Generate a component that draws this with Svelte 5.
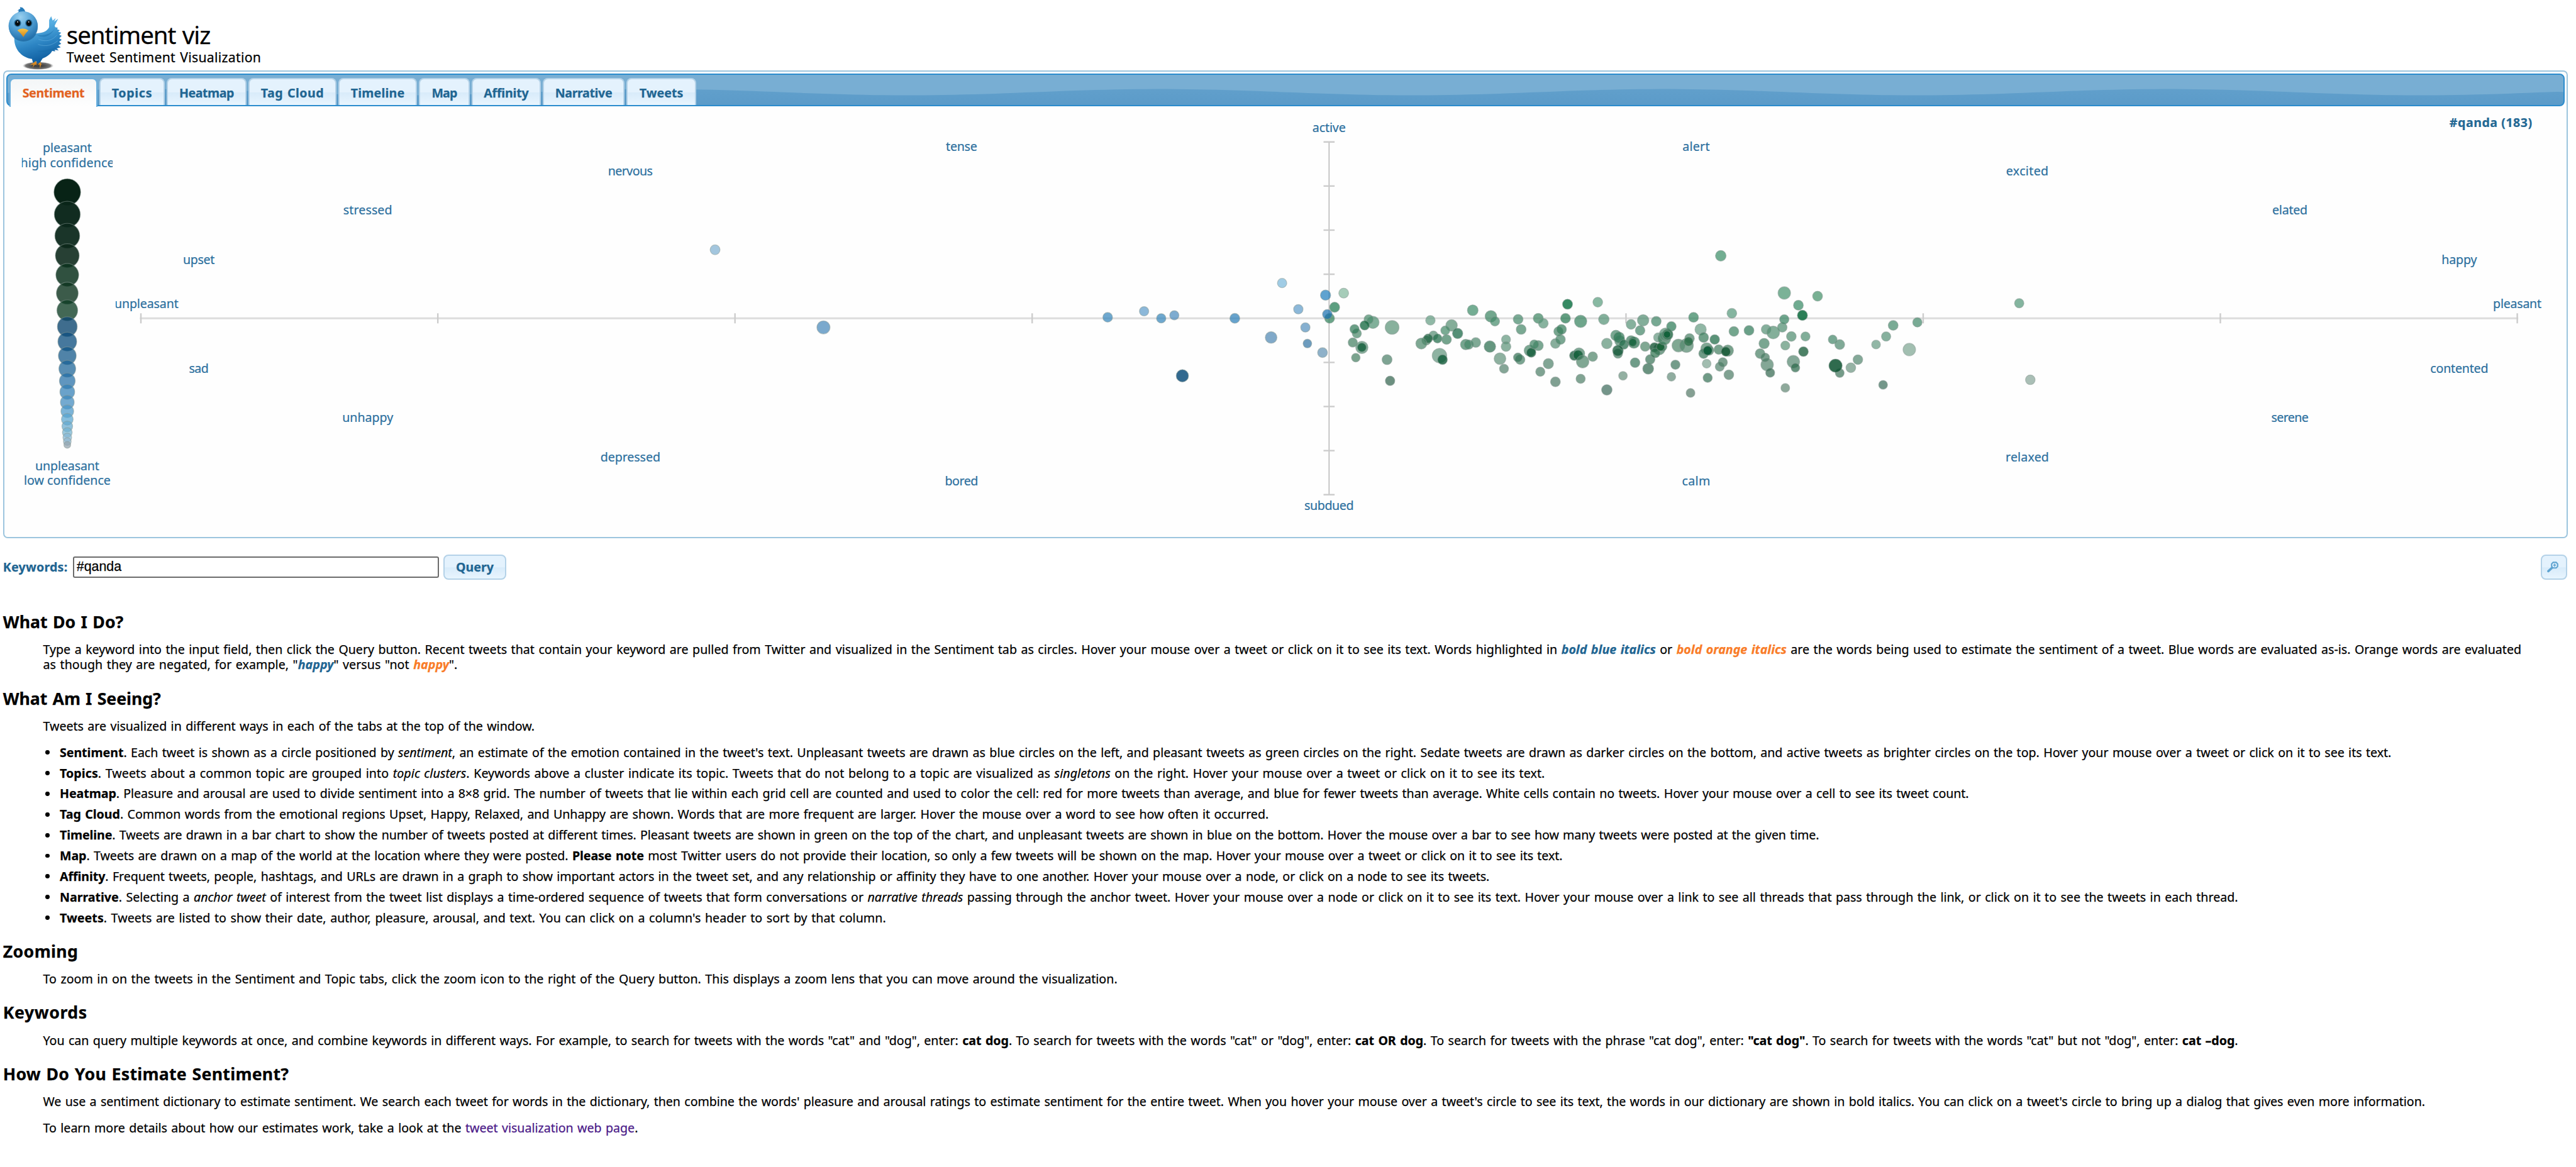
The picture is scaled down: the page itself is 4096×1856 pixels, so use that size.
<script>
  // 1rem equals ten chart units; the root font size sets the scale of the page.
  const UNIT = 0.80157;

  // Spreads a line of text over the given width by adjusting its tracking.
  function fit(node, width) {
    const natural = node.getBoundingClientRect().width;
    const count = node.textContent.trim().length;
    node.style.letterSpacing = `${(width * UNIT - natural) / count}px`;
  }

  const tabs = [
    { label: 'Sentiment', box: 174, text: 123, active: true },
    { label: 'Topics', box: 129.5, text: 80.5 },
    { label: 'Heatmap', box: 158, text: 108.5 },
    { label: 'Tag Cloud', box: 174, text: 125 },
    { label: 'Timeline', box: 156, text: 107 },
    { label: 'Map', box: 100, text: 50 },
    { label: 'Affinity', box: 137, text: 89 },
    { label: 'Narrative', box: 162, text: 113 },
    { label: 'Tweets', box: 138, text: 87 }
  ];

  // Gloss line of the tab bar.
  let wave = 'M0 0';
  for (let x = 0; x <= 5072; x += 20) {
    wave += `L${x} ${(35 + 6.3 * Math.cos(((x - 786) / 1000) * 2 * Math.PI)).toFixed(1)}`;
  }
  wave += 'L5080 35L5080 0Z';

  // label, x (centre), y (baseline), length
  const emotions = [
    ['active', 2637, 262, 66], ['tense', 1908, 300, 62], ['alert', 3365, 300, 54],
    ['nervous', 1251, 348, 89], ['excited', 4022, 348, 84], ['stressed', 730, 426, 97],
    ['elated', 4543, 426, 70], ['upset', 395, 524, 63], ['happy', 4879, 524, 70],
    ['unpleasant', 291, 612, 127], ['pleasant', 4994, 612, 96], ['sad', 395, 740, 39],
    ['contented', 4879, 740, 115], ['unhappy', 730, 838, 101], ['serene', 4543, 838, 74],
    ['depressed', 1251, 916, 119], ['relaxed', 4022, 916, 86], ['bored', 1908, 964, 66],
    ['calm', 3365, 964, 56], ['subdued', 2637, 1012, 98]
  ];

  const xTicks = [280, 869, 1458.5, 2048, 3226, 3815.5, 4405, 4994];
  const yTicks = [282, 369.5, 457, 544.5, 719.5, 807, 894.5, 982];

  const scaleDots = [
    [381.5, 26.5, '042315'], [425.7, 25.8, '102c20'], [468.3, 24.7, '1a3529'],
    [507.6, 23.7, '274034'], [545.9, 22.7, '30503f'], [582.2, 21.7, '3b5b4a'],
    [616.2, 20.7, '436855'], [648.6, 19.7, '3f6d8e'], [678.2, 18.7, '46789d'],
    [706.3, 17.7, '5083a8'], [732, 16.7, '588db3'], [756.2, 15.7, '6096bf'],
    [778, 14.7, '6aa2ca'], [798.4, 13.7, '74aad0'], [816.4, 12.7, '7db4d8'],
    [832.3, 11.7, '86bede'], [846.4, 10.7, '90c1dc'], [858.5, 9.7, '9ac8de'],
    [868.5, 8.7, 'a8cbe0'], [876.5, 7.7, 'b0cbdc'], [883, 6.8, 'b0bcc4']
  ];

  // x, y, radius, colour
  const tweets = `
1419 496 9.8 a3c6de|1634 650 13 7aa9cd|2197.8 630 9.6 6ea8cf|2270 618 9.3 8cb8d9|2304 632 9.3 6ea8cf|2330 626 9.2 7eacd0
2450 632 9.8 67a3cd|2522 670 11.6 80a9c9|2543.8 562 9.3 a0cce5|2576 614 9.4 8cb8d9|2590 650 9.3 86b0d0|2594 682 8.6 6d9cbe
2624 700 9.8 8fb1c9|2346 746 12.2 32698f|2630 586 10.2 5fa3d0|2638 632 9.8 6aa588|2633.5 624 9.6 5b98c6|2666 582 9.8 a6ccb9
2648 610 10 5c9f80|2724 640 12.2 82b09a|2715.6 634 9.3 7dac95|2707.6 646 9.4 4a8b6c|2692 662 9.2 7daa94|2687.5 653.5 9.2 6a9f87
2684 680 9.2 78a48f|2702 689.7 12.3 86b09c|2702 689.7 8.8 438063|2690 710 8.6 7aa38f|2762 650 13.8 88b19d|2752 714 10 7ea493
2758 756 9.4 6c9080|2838 636 9.5 90b9a6|2880 646 11.5 84ae99|2867.5 656 9 79ab93|2892 662 10.3 569077|2844 666 9 85ae9b
2852 672 9 5d957b|2830 676 9 80a893|2833.5 672 9 5a8d75|2820 682 11 7ea894|2870 674 9.7 75a48d|2856 706 14.5 8fb3a2
2862 714 9.7 3f7b60|2922 616 10.7 75ad93|2958 628 11.6 72a78e|2966 638 9.3 7aac95|2908 684 10.5 75a58f|2914 684 9.3 7aa893
2928 680 9.7 80aa96|2956 688 11.5 66967f|2976 712 11.7 8eb1a1|2984 732 9 85a697|2988 674 9 8fb5a3|2988 688 9.7 8bb29f
3012 634 9.7 7aab95|3018 654 9.8 7aa994|3016 714 9.5 7aa591|3011.7 709.7 9 6d9a85|3035 696 11.2 7aa892|3038 700 9.3 437d62
3052 686 10 7ba893|3044 683.7 9 75a58e|3052 632 10 74a88f|3062 642 9.7 88b39f|3072 722 10.2 82a695|3056 738 9.2 7fa392
3086 758 9.8 80a192|3086 682 9.7 88ae9c|3096 674 9.7 7aa792|3092 658 9.3 76a68f|3098 654 9.8 6fa289|3106 632 9.8 629e82
3110 604 10 368a63|3136 638 12.3 6fa68c|3170 600 9.7 88b9a2|3182 634 10.5 84b19c|3123.5 706 9.5 4c8068|3132.7 702 11.5 7da894
3131 705 9.7 3b7a5c|3140 718 12.5 80a794|3160 708 9.5 80a794|3136 752 9.2 82a494|3188 682 10.5 8bb29f|3188 774 10.5 75958a
3214 677 10.5 7aa892|3206 666 10.5 78a891|3212 670 11 6b9e86|3221.7 684 9.3 5d937a|3210 702 9.3 7aa28f|3210 696 10.7 4c8067
3220 746 8.6 94b0a2|3236 644 9.7 86b19d|3236 676 9.7 76a38d|3241.7 680 11.5 659a80|3239.5 680 8 568c71|3244 720 9.6 709c88
3254 656 9.6 78a892|3260 636 11.4 83ae9a|3286 638 9.8 77a993|3264 688 9.5 80a894|3270 732 10.8 6a9380|3274 713.5 9.5 729c88
3292 693 11.5 7aa490|3282.5 689.7 9.5 46795f|3284 700.7 9.7 6a9a82|3290 670 9.3 8fb4a3|3298 688 9.3 75a18b|3294.5 688.7 8 47825f
3302 672 12.8 6f9e86|3305 664 13 84ae9a|3316 648 9.6 68a186|3308.5 664 10.8 6a9a82|3307.5 664 7 2f7553|3324 724 9.2 759c8a
3316 748 8.6 90ada0|3330 686 12.8 80a893|3346 686 13.7 84aa97|3352 672 9.7 7da591|3350 678 9 619476|3360 630 9.8 6ea78c
3354 780 8.8 85a194|3374 654 11.3 90b7a5|3380 670 9.8 6fa088|3402 674 9.6 5b9378|3386 692 11.7 7fa894|3380 702 9.7 709b87
3390.7 695.7 9.7 7aa48f|3388 696 9 236b4a|3386 722 8.7 a2bdb0|3388 750 9.2 6f9a86|3410 694 9.5 78a38d|3412 728 9 84a797
3418 719.3 9.2 7ca18f|3430 744 9.7 80a292|3428 696 11.3 78a28c|3424 698 9.2 42775b|3414 508 10.6 72ae92|3436 622 9.7 85b5a0
3440 658 9.7 75a68f|3470 656 9.8 6ba188|3500 682 10.3 7aa691|3504 654 9.6 85b09c|3518 660 12.7 84af9a|3536 650 9.5 80ad98
3540 634 9.3 70a78e|3540 581.7 12.5 7bb297|3568 606 9.8 70ab90|3576 626 10.1 2c7f57|3606 588 9.9 78b094|3554 668 9.7 82ad98
3542 686 9 8bb29e|3582 668 9.2 82ae99|3578 698 9.7 4c8166|3492 702 9.7 7ca490|3506 724 12.5 84a796|3502 709.7 8.8 7ba18f
3512 740 9 6d9381|3558 718 12.5 84a897|3562 730 8.7 65927d|3542 770 8.7 8fa99b|3636 674 8.8 78a893|3650 684 9.8 80aa97
3650 740.5 8.8 749b88|3641.7 726 13.2 2f6b4e|3672 730 9.7 96b3a5|3686 714 9.6 84a998|3722 684 8.8 92b7a6|3742 668 9.3 86b19e
3756 646 9.8 7aab95|3804 640 9.3 79ab95|3788 694 12.5 a2bfb1|3736 764 8.8 75978a|4006 602 9.3 84b59f|4028 754 9.6 aabfb6`
    .trim()
    .split(/[|\n]/)
    .map((row) => {
      const [x, y, r, colour] = row.split(' ');
      return { x, y, r, ...ink(colour) };
    });

  // Translucent fill that shows as the given colour over white.
  function ink(hex) {
    const rgb = [0, 2, 4].map((i) => parseInt(hex.slice(i, i + 2), 16));
    const alpha = Math.max(0.72, 1.04 - Math.min(...rgb) / 255);
    const a = Math.min(alpha, 0.97);
    const fill = rgb.map((c) => Math.max(0, Math.round((c - 255 * (1 - a)) / a)));
    return { fill: `rgb(${fill})`, alpha: a };
  }
</script>

<div class="page">
  <header class="brand">
    <svg class="bird" viewBox="12 10 114 132" aria-hidden="true">
      <defs>
        <radialGradient id="shade"><stop offset=".3" stop-color="#444" /><stop offset=".8" stop-color="#777" /><stop offset="1" stop-color="#bbb" stop-opacity="0" /></radialGradient>
        <radialGradient id="head" cx=".4" cy=".2" r=".85"><stop offset="0" stop-color="#9ad0ef" /><stop offset=".45" stop-color="#58a5d8" /><stop offset="1" stop-color="#1b69a6" /></radialGradient>
        <linearGradient id="body" x1=".3" y1="0" x2=".6" y2="1"><stop offset=".25" stop-color="#56aee2" /><stop offset=".6" stop-color="#2b83c2" /><stop offset="1" stop-color="#0b589a" /></linearGradient>
        <linearGradient id="beak" x2="0" y2="1"><stop offset="0" stop-color="#f9c544" /><stop offset="1" stop-color="#cf831b" /></linearGradient>
      </defs>
      <ellipse cx="75" cy="130.500" rx="31" ry="8" fill="url(#shade)" />
      <path d="M66 112l1 12-8 5 7-1-2 6 5-6 3 1-1-17zM75 112l2 14-3 3 4-1 1 8 2-8 2 2-3-6 0-12z" fill="#d98a22" />
      <path d="M28 72C26 97 42 114 63 117L65 125 71 121 74 126 79 124 84 116C94 112 100 107 103 101L109 102 108 99 116 100 112 96 120 94 115 90 121 87 117 83 122 79 117 76 122 71 117 69 121 65 115 63 118 60 113 58 114 55 109 54 108 51 115 37 107 43 110 36 104 41 101 32 97 40 97 54C93 62 85 65 74 66z" fill="url(#body)" />
      <path d="M73 70C86 77 100 72 108 57C101 68 88 70 73 70zM73 101C87 106 102 102 110 94C101 98 86 101 73 101z" fill="#176aa9" opacity=".45" />
      <path d="M76 78C91 84 104 80 112 70M75 88C91 94 104 89 114 81" fill="none" stroke="#82c5ed" stroke-width="1" opacity=".5" />
      <ellipse cx="46" cy="54" rx="28.500" ry="28.500" fill="#0c4778" opacity=".45" />
      <path d="M35 26L37 21 34 21 40 17 39 14 44 15 48 19 50 24 51 29z" fill="#277cba" />
      <circle cx="45.500" cy="51.500" r="29" fill="url(#head)" />
      <ellipse cx="34.400" cy="46" rx="7" ry="7.500" fill="#236794" />
      <ellipse cx="56.700" cy="46" rx="7" ry="7.500" fill="#236794" />
      <ellipse cx="34.400" cy="46" rx="5" ry="5.600" fill="#070b0d" />
      <ellipse cx="56.700" cy="46" rx="5" ry="5.600" fill="#070b0d" />
      <circle cx="34.500" cy="43.500" r="1.300" fill="#b9cbd6" />
      <circle cx="56.500" cy="43.500" r="1.300" fill="#b9cbd6" />
      <path d="M34 60.500C39 55.500 50 55.500 56 60.500C52 64 49 68 46 73.500C42 68 39 64 34 60.500z" fill="url(#beak)" />
    </svg>
    <div class="names">
      <h1><span class="line" use:fit={285}>sentiment viz</span></h1>
      <p><span class="line" use:fit={386}>Tweet Sentiment Visualization</span></p>
    </div>
  </header>

  <section class="panel">
    <nav class="bar">
      <svg class="gloss" viewBox="0 0 5072 60" preserveAspectRatio="none" aria-hidden="true"><path d={wave} /></svg>
      {#each tabs as tab}
        <a class="tab" class:active={tab.active} style:width="{tab.box / 10}rem"><span class="line" use:fit={tab.text}>{tab.label}</span></a>
      {/each}
    </nav>

    <svg class="chart" viewBox="8 210 5084 856">
      <defs>
        <clipPath id="legend-clip"><rect x="44" y="250" width="180" height="740" /></clipPath>
        <clipPath id="plot-clip"><rect x="230" y="220" width="4850" height="830" /></clipPath>
      </defs>
      <g clip-path="url(#legend-clip)">
        <text x="134" y="302" textLength="97">pleasant</text>
        <text x="134" y="332" textLength="186">high confidence</text>
        <text x="134" y="933" textLength="127">unpleasant</text>
        <text x="134" y="962" textLength="172">low confidence</text>
        {#each scaleDots as [y, r, colour]}
          {@const tone = ink(colour)}
          <circle class="dot" cx="134" cy={y} {r} fill={tone.fill} fill-opacity={tone.alpha} />
        {/each}
      </g>
      <g clip-path="url(#plot-clip)">
        <path class="axis-x" d="M278 632H4996" />
        <path class="axis-y" d="M2637 281V983" />
        {#each xTicks as x}<path class="tick" d="M{x} 622V642" />{/each}
        {#each yTicks as y}<path class="tick" d="M2626 {y}H2648" />{/each}
        {#each emotions as [label, x, y, length]}
          <text {x} {y} textLength={length}>{label}</text>
        {/each}
        <text class="count" x="4941.500" y="252" textLength="164">#qanda (183)</text>
        {#each tweets as t}
          <circle class="dot" cx={t.x} cy={t.y} r={t.r} fill={t.fill} fill-opacity={t.alpha} />
        {/each}
      </g>
    </svg>
  </section>

  <div class="query">
    <label for="keywords"><span class="line" use:fit={128}>Keywords:</span></label>
    <input id="keywords" value="#qanda" />
    <button class="go"><span class="line" use:fit={75}>Query</span></button>
    <button class="zoom" aria-label="Zoom">
      <svg viewBox="0 0 26 24"><path d="M2.500 20.500L9.500 14" stroke-width="4.500" stroke-linecap="round" /><path d="M12 3H18L21 6V11L18 14H12L9 11V6Z" stroke-width="2.600" /><path d="M15 5.500V11.500M12 8.500H18" stroke-width="2" /></svg>
    </button>
  </div>

  <main>
    <h2><span class="line" use:fit={239}>What Do I Do?</span></h2>
    <p>
      <span class="line" use:fit={4916}>Type a keyword into the input field, then click the Query button. Recent tweets that contain your keyword are pulled from Twitter and visualized in the Sentiment tab as circles. Hover your mouse over a tweet or click on it to see its text. Words highlighted in <b class="blue">bold blue italics</b> or <b class="orange">bold orange italics</b> are the words being used to estimate the sentiment of a tweet. Blue words are evaluated as-is. Orange words are evaluated</span>
      <span class="line" use:fit={822}>as though they are negated, for example, "<b class="blue">happy</b>" versus "not <b class="orange">happy</b>".</span>
    </p>

    <h2><span class="line" use:fit={313}>What Am I Seeing?</span></h2>
    <p><span class="line" use:fit={975}>Tweets are visualized in different ways in each of the tabs at the top of the window.</span></p>
    <ul>
      <li><span class="line" use:fit={4625}><b>Sentiment</b>. Each tweet is shown as a circle positioned by <i>sentiment</i>, an estimate of the emotion contained in the tweet's text. Unpleasant tweets are drawn as blue circles on the left, and pleasant tweets as green circles on the right. Sedate tweets are drawn as darker circles on the bottom, and active tweets as brighter circles on the top. Hover your mouse over a tweet or click on it to see its text.</span></li>
      <li><span class="line" use:fit={2946}><b>Topics</b>. Tweets about a common topic are grouped into <i>topic clusters</i>. Keywords above a cluster indicate its topic. Tweets that do not belong to a topic are visualized as <i>singletons</i> on the right. Hover your mouse over a tweet or click on it to see its text.</span></li>
      <li><span class="line" use:fit={3787}><b>Heatmap</b>. Pleasure and arousal are used to divide sentiment into a 8×8 grid. The number of tweets that lie within each grid cell are counted and used to color the cell: red for more tweets than average, and blue for fewer tweets than average. White cells contain no tweets. Hover your mouse over a cell to see its tweet count.</span></li>
      <li><span class="line" use:fit={2398}><b>Tag Cloud</b>. Common words from the emotional regions Upset, Happy, Relaxed, and Unhappy are shown. Words that are more frequent are larger. Hover the mouse over a word to see how often it occurred.</span></li>
      <li><span class="line" use:fit={3490}><b>Timeline</b>. Tweets are drawn in a bar chart to show the number of tweets posted at different times. Pleasant tweets are shown in green on the top of the chart, and unpleasant tweets are shown in blue on the bottom. Hover the mouse over a bar to see how many tweets were posted at the given time.</span></li>
      <li><span class="line" use:fit={2981}><b>Map</b>. Tweets are drawn on a map of the world at the location where they were posted. <b>Please note</b> most Twitter users do not provide their location, so only a few tweets will be shown on the map. Hover your mouse over a tweet or click on it to see its text.</span></li>
      <li><span class="line" use:fit={2836}><b>Affinity</b>. Frequent tweets, people, hashtags, and URLs are drawn in a graph to show important actors in the tweet set, and any relationship or affinity they have to one another. Hover your mouse over a node, or click on a node to see its tweets.</span></li>
      <li><span class="line" use:fit={4321}><b>Narrative</b>. Selecting a <i>anchor tweet</i> of interest from the tweet list displays a time-ordered sequence of tweets that form conversations or <i>narrative threads</i> passing through the anchor tweet. Hover your mouse over a node or click on it to see its text. Hover your mouse over a link to see all threads that pass through the link, or click on it to see the tweets in each thread.</span></li>
      <li><span class="line" use:fit={1639}><b>Tweets</b>. Tweets are listed to show their date, author, pleasure, arousal, and text. You can click on a column's header to sort by that column.</span></li>
    </ul>

    <h2><span class="line" use:fit={149}>Zooming</span></h2>
    <p><span class="line" use:fit={2131}>To zoom in on the tweets in the Sentiment and Topic tabs, click the zoom icon to the right of the Query button. This displays a zoom lens that you can move around the visualization.</span></p>

    <h2><span class="line" use:fit={167}>Keywords</span></h2>
    <p><span class="line" use:fit={4354}>You can query multiple keywords at once, and combine keywords in different ways. For example, to search for tweets with the words "cat" and "dog", enter: <b>cat dog</b>. To search for tweets with the words "cat" or "dog", enter: <b>cat OR dog</b>. To search for tweets with the phrase "cat dog", enter: <b>"cat dog"</b>. To search for tweets with the words "cat" but not "dog", enter: <b>cat –dog</b>.</span></p>

    <h2><span class="line" use:fit={567}>How Do You Estimate Sentiment?</span></h2>
    <p><span class="line" use:fit={4725}>We use a sentiment dictionary to estimate sentiment. We search each tweet for words in the dictionary, then combine the words' pleasure and arousal ratings to estimate sentiment for the entire tweet. When you hover your mouse over a tweet's circle to see its text, the words in our dictionary are shown in bold italics. You can click on a tweet's circle to bring up a dialog that gives even more information.</span></p>
    <p class="more"><span class="line" use:fit={1180}>To learn more details about how our estimates work, take a look at the <span class="link">tweet visualization web page</span>.</span></p>
  </main>
</div>

<style>
  :global(html) {
    font-size: 8.0157px;
    overflow: hidden;
    background: #fff;
  }
  .page {
    box-sizing: border-box;
    width: 511rem;
    height: 231.6rem;
    overflow: hidden;
    padding: 0 1.6rem 0 0.6rem;
    font-family: 'Noto Sans', 'Open Sans', sans-serif;
    font-size: 2.45rem;
    line-height: 3rem;
    word-spacing: 0.07em;
    -webkit-text-stroke: 0.25px currentColor;
    color: #000;
  }
  h1, h2, p, ul {
    margin: 0;
    padding: 0;
  }
  .line {
    display: inline-block;
    white-space: nowrap;
  }

  .brand {
    display: flex;
    box-sizing: border-box;
    height: 14rem;
    padding-left: 0.6rem;
  }
  .bird {
    flex: none;
    width: 11.4rem;
    height: 13.2rem;
    margin-top: 1rem;
  }
  .names {
    padding: 4rem 0 0 0.6rem;
  }
  h1 {
    height: 5.8rem;
    font-size: 4.8rem;
    font-weight: 400;
    line-height: 5.8rem;
  }
  .names p {
    font-size: 2.65rem;
    line-height: 3.1rem;
  }

  .panel {
    box-sizing: border-box;
    height: 92.8rem;
    padding: 0.4rem;
    border: 2px solid #9cc5de;
    border-radius: 0.9rem;
    background: #fefefe;
  }
  .bar {
    position: relative;
    display: flex;
    gap: 0.42rem;
    box-sizing: border-box;
    height: 6.4rem;
    padding: 0.6rem 0 0 0.4rem;
    border: 2px solid #2b8ccd;
    border-radius: 1rem;
    background: linear-gradient(#66a3cd, #5b9bc9);
  }
  .gloss {
    position: absolute;
    inset: 0;
    width: 100%;
    height: 100%;
    border-radius: 0.8rem 0.8rem 0 0;
    fill: #78aed3;
  }
  .tab {
    position: relative;
    box-sizing: border-box;
    flex: none;
    height: 5.35rem;
    border: 2px solid #b4d2e8;
    border-bottom: 0;
    border-radius: 1rem 1rem 0 0;
    background: linear-gradient(#e4f2fd 50%, #d8ebfa 52%, #e8f5fe);
    color: #1f6592;
    font-weight: 700;
    line-height: 5.4rem;
    text-align: center;
  }
  .tab.active {
    height: 5.65rem;
    border-color: #6bb0de;
    background: linear-gradient(#f3f6f7, #fefefe);
    color: #e2621f;
  }

  .chart {
    display: block;
    width: 508.4rem;
    height: 85.6rem;
    margin: -0.1rem 0 0 -0.45rem;
  }
  .chart text {
    font-size: 24.5px;
    fill: #2d709e;
    text-anchor: middle;
    word-spacing: 0;
    stroke: #2d709e;
    stroke-width: 0.3;
    -webkit-text-stroke: 0;
  }
  .chart .count {
    font-weight: 700;
    fill: #236893;
  }
  .dot {
    stroke: #8a9a94;
    stroke-opacity: 0.5;
    stroke-width: 1.5;
  }
  .axis-x {
    stroke: #dcdcdc;
    stroke-width: 4;
  }
  .axis-y {
    stroke: #bababa;
    stroke-width: 2;
  }
  .tick {
    stroke: #cccccc;
    stroke-width: 3;
  }

  .query {
    display: flex;
    align-items: center;
    height: 5rem;
    margin-top: 3.2rem;
    color: #1f6592;
    font-weight: 700;
    line-height: 5rem;
  }
  .query label {
    width: 13.85rem;
  }
  input {
    box-sizing: border-box;
    width: 72.6rem;
    height: 4.2rem;
    padding: 0 0.5rem;
    border: 2px solid #6b6b6b;
    border-radius: 0.4rem;
    background: #fff;
    color: #000;
    font: 2.667rem 'Liberation Sans', Arial, sans-serif;
  }
  button {
    box-sizing: border-box;
    height: 5rem;
    margin: 0;
    padding: 0;
    border: 2px solid #b4d2e8;
    border-radius: 1rem;
    background: linear-gradient(#e4f2fd 50%, #d8ebfa 52%, #e8f5fe);
    color: #1f6592;
    font: inherit;
    line-height: 4.6rem;
  }
  .go {
    width: 12.4rem;
    margin-left: 0.95rem;
  }
  .zoom {
    display: flex;
    align-items: center;
    justify-content: center;
    width: 5.2rem;
    margin-left: auto;
    margin-right: 0.2rem;
  }
  .zoom svg {
    width: 2.6rem;
    height: 2.4rem;
    fill: none;
    stroke: #60a4d1;
  }

  main {
    padding-top: 3.25rem;
  }
  h2 {
    margin-top: 3.15rem;
    font-size: 3.33rem;
    line-height: 4rem;
  }
  main p {
    margin: 2.03rem 0 0 7.95rem;
  }
  main p .line {
    display: block;
    width: max-content;
  }
  main .more {
    margin-top: 2.2rem;
  }
  ul {
    display: flex;
    flex-direction: column;
    gap: 1.1rem;
    margin-top: 2.2rem;
    list-style: none;
  }
  li {
    display: flex;
    align-items: center;
    height: 3rem;
    padding-left: 8.4rem;
  }
  li::before {
    content: '';
    width: 0.85rem;
    height: 0.85rem;
    margin-right: 2rem;
    border-radius: 50%;
    background: #000;
  }
  .blue {
    color: #1f6592;
    font-style: italic;
  }
  .orange {
    color: #f97c28;
    font-style: italic;
  }
  .link {
    color: #4b1a88;
  }
</style>
